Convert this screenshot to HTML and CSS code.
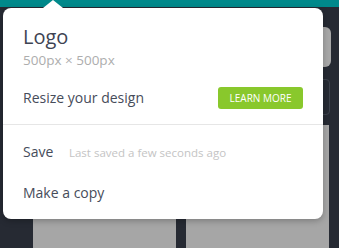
FILE: index.html
```
<!DOCTYPE html>
<html lang="en">
<head>
    <meta charset="UTF-8">
    <title>Design menu</title>
    <link rel="stylesheet" href="styles.css">
</head>
<body>
    <div class="topbar"></div>
    <div class="workspace">
        <div class="search-box"></div>
        <div class="filter-box"></div>
        <div class="cards">
            <div class="card"><span class="badge">FREE</span></div>
            <div class="card"><span class="badge badge-light">FREE</span></div>
        </div>
    </div>

    <div class="menu">
        <div class="menu-head">
            <div class="design-name">Logo</div>
            <div class="design-size">500px × 500px</div>
            <div class="resize-row">
                <span>Resize your design</span>
                <button class="learn-btn">LEARN MORE</button>
            </div>
        </div>
        <div class="menu-list">
            <div class="menu-item">Save <span class="menu-note">Last saved a few seconds ago</span></div>
            <div class="menu-item">Make a copy</div>
        </div>
    </div>
</body>
</html>
```

FILE: styles.css
```
body, html {
    margin: 0;
    padding: 0;
    width: 100%;
    height: 100%;
    overflow: hidden;
    background-color: #262a33;
    font-family: 'Open Sans', sans-serif;
}
.topbar {
    height: 7px;
    background-color: #00898b;
}
.workspace {
    padding: 20px 10px 0 33px;
}
.search-box {
    height: 40px;
    margin-right: -2px;
    background-color: #a8a8a8;
    border-radius: 6px;
}
.filter-box {
    height: 34px;
    margin-top: 12px;
    margin-right: -1px;
    border: 1px solid #3e434d;
    border-radius: 4px;
}
.cards {
    display: grid;
    grid-template-columns: 143px 1fr;
    gap: 10px;
    margin-top: 10px;
}
.card {
    height: 140px;
    background-color: #a6a6a6;
    display: flex;
    justify-content: flex-end;
    align-items: flex-end;
    padding: 0 5px 0 0;
}
.card:first-child {
    padding-right: 10px;
}
.badge {
    font-size: 10px;
    font-weight: 600;
    color: #555a60;
    padding: 1px 4px;
    border-radius: 3px;
    line-height: 14px;
    margin-bottom: -5px;
}
.badge-light {
    background-color: #b4b4b4;
}

.menu {
    position: absolute;
    top: 8px;
    left: 3px;
    width: 320px;
    height: 211px;
    background-color: #ffffff;
    border-radius: 8px;
    box-shadow: 0 2px 6px rgba(0, 0, 0, 0.25);
}
.menu::before {
    content: '';
    position: absolute;
    top: -8px;
    left: 40px;
    border-left: 10px solid transparent;
    border-right: 10px solid transparent;
    border-bottom: 8px solid #ffffff;
}
.menu-head {
    padding: 15px 20px 15px 20px;
    border-bottom: 1px solid #e6e6e6;
}
.design-name {
    font-size: 20px;
    line-height: 27px;
    color: #3e4453;
}
.design-size {
    font-size: 13.5px;
    line-height: 18px;
    margin-top: 1px;
    color: #adadad;
}
.resize-row {
    display: flex;
    justify-content: space-between;
    align-items: center;
    margin-top: 18px;
    font-size: 14px;
    line-height: 20px;
    color: #464c5a;
}
.learn-btn {
    height: 22px;
    width: 85px;
    padding: 0;
    border: none;
    border-radius: 3px;
    background-color: #89c82c;
    color: #ffffff;
    font-family: 'Open Sans', sans-serif;
    font-size: 10px;
}
.menu-list {
    padding-top: 7px;
}
.menu-item {
    padding: 10px 20px;
    font-size: 14px;
    line-height: 20px;
    color: #464c5a;
}
.menu-note {
    margin-left: 12px;
    font-size: 11.5px;
    color: #c4c4c4;
}
```
